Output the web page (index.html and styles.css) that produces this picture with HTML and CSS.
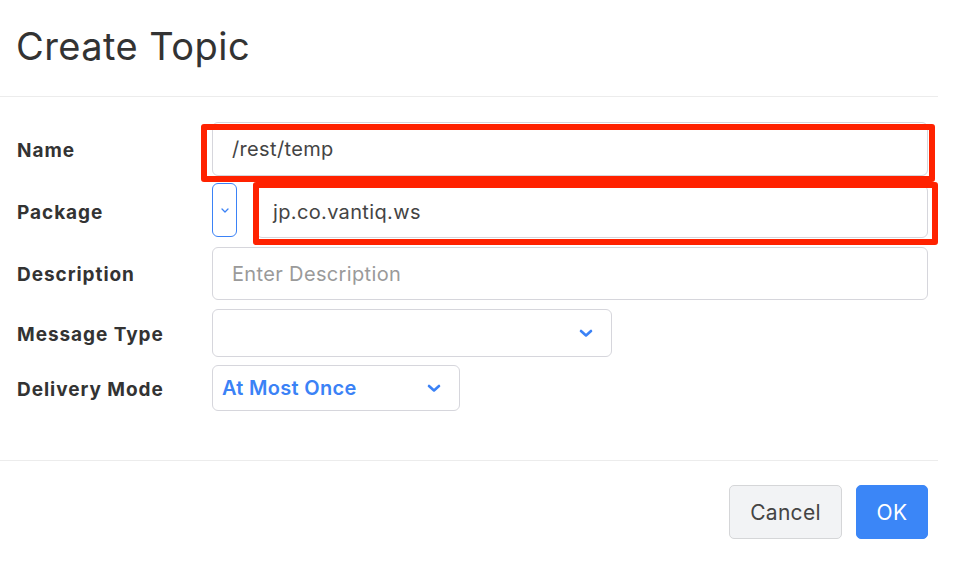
FILE: index.html
```html
<!DOCTYPE html>
<html>
<head>
<meta charset="utf-8">
<link rel="stylesheet" href="styles.css">
</head>
<body>
<div class="modal">
  <div class="modal-header">
    <h1 class="title">Create Topic</h1>
  </div>
  <div class="modal-body">
    <div class="row row-name">
      <label class="label">Name</label>
      <div class="control">
        <div class="input input-name">/rest/temp</div>
        <div class="mark mark-name"></div>
      </div>
    </div>
    <div class="row row-package">
      <label class="label">Package</label>
      <div class="control pkg">
        <div class="pkg-btn">
          <svg width="8" height="5" viewBox="0 0 8 5"><path d="M1 1 L4 4 L7 1" fill="none" stroke="#3b82f6" stroke-width="1.3" stroke-linecap="round" stroke-linejoin="round"/></svg>
        </div>
        <div class="input input-pkg">jp.co.vantiq.ws</div>
        <div class="mark mark-pkg"></div>
      </div>
    </div>
    <div class="row row-desc">
      <label class="label">Description</label>
      <div class="control">
        <div class="input input-desc placeholder">Enter Description</div>
      </div>
    </div>
    <div class="row row-msg">
      <label class="label">Message Type</label>
      <div class="control">
        <div class="select select-msg">
          <span class="select-text"></span>
          <svg class="chev" width="14" height="9" viewBox="0 0 14 9"><path d="M2 2 L7 6.5 L12 2" fill="none" stroke="#3b82f6" stroke-width="2.6" stroke-linecap="round" stroke-linejoin="round"/></svg>
        </div>
      </div>
    </div>
    <div class="row row-mode">
      <label class="label">Delivery Mode</label>
      <div class="control">
        <div class="select select-mode">
          <span class="select-text blue">At Most Once</span>
          <svg class="chev" width="14" height="9" viewBox="0 0 14 9"><path d="M2 2 L7 6.5 L12 2" fill="none" stroke="#3b82f6" stroke-width="2.6" stroke-linecap="round" stroke-linejoin="round"/></svg>
        </div>
      </div>
    </div>
  </div>
  <div class="modal-footer">
    <button class="btn btn-cancel">Cancel</button>
    <button class="btn btn-ok">OK</button>
  </div>
</div>
</body>
</html>
```
FILE: styles.css
```css
* { box-sizing: border-box; }
html, body { margin: 0; padding: 0; background: #fff; }
body {
  font-family: Inter, "Noto Sans", "Liberation Sans", sans-serif;
  color: #333;
  width: 980px;
  height: 562px;
  overflow: hidden;
}
.modal { width: 938px; }
.modal-header {
  height: 97px;
  border-bottom: 1px solid #ececec;
  padding-left: 16px;
  display: flex;
  align-items: flex-start;
}
.title {
  margin: 22px 0 0 0;
  font-size: 38px;
  font-weight: 400;
  color: #333;
  letter-spacing: 0.45px;
  line-height: 48px;
}
.modal-body {
  padding: 25px 10px 0 17px;
  height: 364px;
  border-bottom: 1px solid #ececec;
}
.row {
  display: grid;
  grid-template-columns: 195px 1fr;
  align-items: center;
}
.row-name { height: 54px; }
.row-package { height: 54px; margin-top: 8px; }
.row-desc { height: 53px; margin-top: 9px; }
.row-msg { height: 48px; margin-top: 9px; }
.row-mode { height: 46px; margin-top: 8px; }
.label {
  font-size: 19px;
  font-weight: 700;
  color: #333;
  letter-spacing: 0.95px;
  padding-top: 2px;
}
.control {
  position: relative;
  height: 100%;
  display: flex;
}
.input {
  flex: 1;
  height: 100%;
  border: 1px solid #d6d6dc;
  border-radius: 6px;
  font-size: 20px;
  letter-spacing: 0.35px;
  color: #444;
  padding-left: 19px;
  display: flex;
  align-items: center;
}
.input-pkg { margin-left: 19px; height: 53px; align-self: flex-end; padding-left: 16px; }
.placeholder { color: #9a9a9a; }
.pkg-btn {
  width: 25px;
  height: 54px;
  border: 1px solid #3b82f6;
  border-radius: 6px;
  display: flex;
  align-items: center;
  justify-content: center;
  margin-top: -1px;
}
.select {
  height: 100%;
  border: 1px solid #d6d6dc;
  border-radius: 6px;
  display: flex;
  align-items: center;
  justify-content: space-between;
  padding: 0 18px 0 9px;
}
.select-msg { width: 400px; }
.select-mode { width: 248px; padding-right: 18px; }
.select-text { font-size: 20px; font-weight: 600; letter-spacing: 0.3px; }
.blue { color: #3b82f6; }
.chev { display: block; margin-top: 1px; }
.mark {
  position: absolute;
  border: 6px solid #ff2200;
  border-radius: 3px;
  pointer-events: none;
}
.mark-name { left: -11px; right: -7px; top: 2px; bottom: -6px; }
.mark-pkg { left: 41px; right: -10px; top: -2px; bottom: -7px; }
.modal-footer {
  display: flex;
  justify-content: flex-end;
  gap: 14px;
  padding: 24px 10px 0 0;
}
.btn {
  font-family: inherit;
  font-size: 21px;
  letter-spacing: 0.3px;
  height: 54px;
  border-radius: 5px;
  cursor: pointer;
}
.btn-cancel {
  width: 113px;
  background: #f2f3f5;
  border: 1px solid #d5d6d8;
  color: #444;
}
.btn-ok {
  width: 72px;
  background: #3b86f7;
  border: 1px solid #3b86f7;
  color: #fff;
}
```
